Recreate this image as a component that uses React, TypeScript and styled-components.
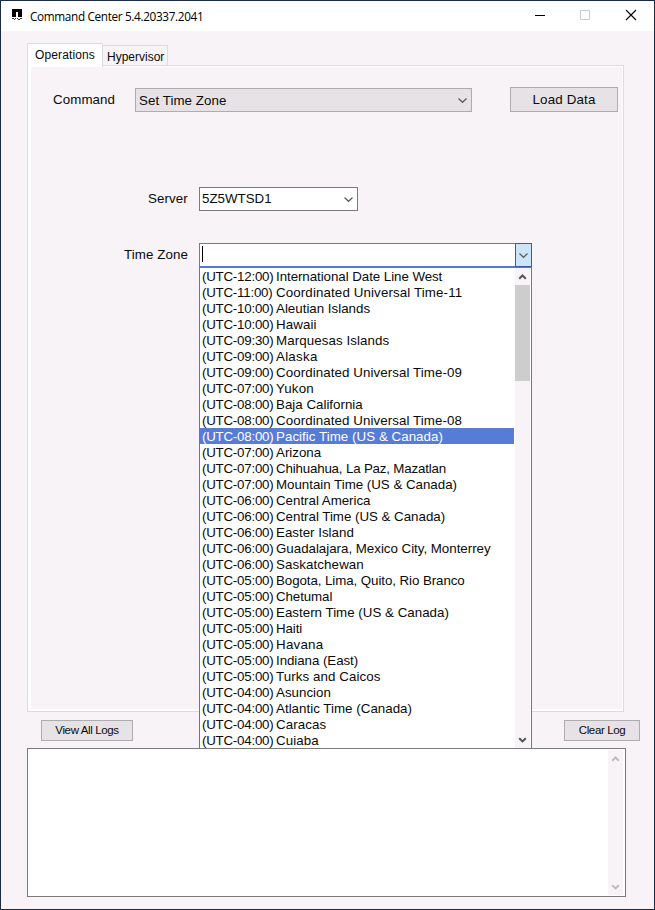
import React from 'react';
import styled, { createGlobalStyle } from 'styled-components';

const Global = createGlobalStyle`
  * { box-sizing: border-box; }
  body { margin: 0; }
`;

const Window = styled.div`
  width: 655px;
  height: 910px;
  overflow: hidden;
  display: flex;
  flex-direction: column;
  background: #f7f3f7;
  border: 1px solid #1b2b45;
  color: #0a0a0a;
  font: 13.33px/16px 'Liberation Sans', Arial, sans-serif;
`;

const TitleBar = styled.header`
  flex: none;
  height: 30px;
  display: flex;
  align-items: center;
  background: #fff;
  padding: 0 1px 0 11px;
`;

const Title = styled.h1`
  flex: 1;
  margin: 0 0 0 8px;
  font: 400 11.75px/16px 'Open Sans', sans-serif;
  letter-spacing: -0.34px;
  color: #000;
`;

const CaptionButtons = styled.div`
  display: flex;
  svg { display: block; width: 45px; height: 30px; }
`;

const Client = styled.main`
  flex: 1;
  display: flex;
  flex-direction: column;
  padding: 12px 15px 0 26px;
`;

const Tabs = styled.nav`
  display: flex;
  align-items: flex-end;
  height: 22px;
`;

const Tab = styled.div<{ $active?: boolean }>`
  position: relative;
  z-index: ${p => (p.$active ? 1 : 0)};
  width: ${p => (p.$active ? 76 : 65)}px;
  height: ${p => (p.$active ? 24 : 20)}px;
  margin-bottom: ${p => (p.$active ? -2 : 0)}px;
  padding: ${p => (p.$active ? '3px 0 0 7px' : '3px 0 0 4px')};
  border: 1px solid #dcdce0;
  border-bottom: 0;
  border-left-width: ${p => (p.$active ? 1 : 0)}px;
  background: ${p => (p.$active ? '#fff' : '#f7f3f7')};
  font-size: 12px;
  white-space: nowrap;
`;

const Text = styled.span<{ $track?: number }>`
  letter-spacing: ${p => p.$track ?? 0}px;
  white-space: pre;
`;

const Page = styled.section`
  width: 597px;
  height: 647px;
  border: 1px solid #dcdce0;
  background: #f7f3f7;
  box-shadow: inset 3px 1px #fff, inset -1px -2px #fff;
  padding: 21px 5px 0 25px;
`;

const Row = styled.div<{ $gap: number; $indent?: number }>`
  display: flex;
  align-items: flex-start;
  height: 25px;
  margin-bottom: ${p => p.$gap}px;
  padding-left: ${p => p.$indent ?? 0}px;
`;

const Label = styled.label<{ $width: number; $track?: number; $top?: number }>`
  width: ${p => p.$width}px;
  padding-top: ${p => p.$top ?? 4}px;
  letter-spacing: ${p => p.$track ?? 0.08}px;
  white-space: nowrap;
`;

const Combo = styled.div<{ $width: number; $filled?: boolean }>`
  display: flex;
  align-items: center;
  justify-content: space-between;
  width: ${p => p.$width}px;
  height: 24px;
  margin-top: ${p => (p.$filled ? 1 : 0)}px;
  padding: ${p => (p.$filled ? '1px 3px 0 3px' : '0 3px 0 2px')};
  border: 1px solid ${p => (p.$filled ? '#adadb0' : '#7a7a7a')};
  background: ${p => (p.$filled ? '#e6e2e6' : '#fff')};
`;

const OpenCombo = styled.div`
  position: relative;
  display: flex;
  width: 333px;
  height: 24px;
  border: 1px solid #567cd4;
  border-right: 0;
  background: #fff;
`;

const Caret = styled.span`
  flex: 1;
  &::before {
    content: '';
    display: block;
    width: 1px;
    height: 16px;
    margin: 2px 0 0 2px;
    background: #000;
  }
`;

const DropButton = styled.div`
  width: 17px;
  height: 24px;
  margin-top: -1px;
  display: grid;
  place-items: center;
  border: 1px solid #3a5ba8;
  background: #cce4f7;
`;

const Popup = styled.div`
  position: absolute;
  z-index: 3;
  left: -1px;
  top: 23px;
  width: 333px;
  height: 481px;
  display: flex;
  border: 1px solid #7a7678;
  border-bottom: 0;
  background: #fff;
`;

const Options = styled.ul`
  width: 315px;
  margin: 0;
  padding: 0 1px 0 0;
  list-style: none;
`;

const Option = styled.li<{ $selected?: boolean }>`
  display: grid;
  grid-template-columns: 74px 1fr;
  height: 16px;
  padding-left: 2px;
  line-height: 17px;
  white-space: nowrap;
  background: ${p => (p.$selected ? '#567cd6' : 'transparent')};
  color: ${p => (p.$selected ? '#fff' : '#0a0a0a')};
`;

const ScrollBar = styled.div`
  width: 15px;
  display: flex;
  flex-direction: column;
  justify-content: space-between;
  background: #f7f3f7;
  svg { flex: none; display: block; }
`;

const Thumb = styled.div`
  height: 96px;
  margin-bottom: auto;
  background: #cdcdcd;
`;

const Button = styled.button<{ $width: number; $height: number; $small?: boolean }>`
  width: ${p => p.$width}px;
  height: ${p => p.$height}px;
  padding: 0;
  border: 1px solid #adadb0;
  background: #e6e2e6;
  color: #0a0a0a;
  font: ${p => (p.$small ? '11.5px/17px' : '13.33px/16px')} 'Liberation Sans', Arial, sans-serif;
`;

const LoadSlot = styled.div`
  margin-left: auto;
`;

const LogActions = styled.div`
  display: flex;
  justify-content: space-between;
  height: 36px;
  padding: 8px 0 0 14px;
  margin-right: -1px;
`;

const LogBox = styled.div`
  width: 599px;
  height: 149px;
  display: flex;
  justify-content: flex-end;
  padding: 1px 2px 1px 0;
  border: 1px solid #7a7a7a;
  background: #fff;
`;

const Chevron = () => (
  <svg width="11" height="7" viewBox="0 0 11 7" fill="none" stroke="#5a5a5a" strokeWidth="1.2">
    <path d="M1.5 1.5 5.5 5.3 9.5 1.5" />
  </svg>
);

const Arrow = ({ down, color }: { down?: boolean; color: string }) => (
  <svg width="15" height="17" viewBox="0 0 15 17" fill="none" stroke={color} strokeWidth="2">
    <path d={down ? 'M4.2 7.2 7.5 10.4 10.8 7.2' : 'M4.2 10.8 7.5 7.5 10.8 10.8'} />
  </svg>
);

const AppIcon = () => (
  <svg width="10" height="14" viewBox="0 0 10 14" shapeRendering="crispEdges">
    <path d="M0 0H10V8H6V3H4V8H0Z" fill="#000" />
    <path d="M0 9H2V10H0ZM3 9H4V10H3ZM5 9H6V10H5ZM8 9H10V10H8ZM2 10H3V11H2ZM6 10H8V11H6Z" fill="#333" />
  </svg>
);

const zones: [string, string, number][] = [
  ['(UTC-12:00)', 'International Date Line West', -0.06],
  ['(UTC-11:00)', 'Coordinated Universal Time-11', 0.12],
  ['(UTC-10:00)', 'Aleutian Islands', 0],
  ['(UTC-10:00)', 'Hawaii', 0.1],
  ['(UTC-09:30)', 'Marquesas Islands', 0.08],
  ['(UTC-09:00)', 'Alaska', 0.26],
  ['(UTC-09:00)', 'Coordinated Universal Time-09', 0.08],
  ['(UTC-07:00)', 'Yukon', 0.15],
  ['(UTC-08:00)', 'Baja California', 0],
  ['(UTC-08:00)', 'Coordinated Universal Time-08', 0.08],
  ['(UTC-08:00)', 'Pacific Time (US & Canada)', 0.04],
  ['(UTC-07:00)', 'Arizona', 0],
  ['(UTC-07:00)', 'Chihuahua, La Paz, Mazatlan', -0.18],
  ['(UTC-07:00)', 'Mountain Time (US & Canada)', -0.02],
  ['(UTC-06:00)', 'Central America', -0.02],
  ['(UTC-06:00)', 'Central Time (US & Canada)', -0.02],
  ['(UTC-06:00)', 'Easter Island', 0],
  ['(UTC-06:00)', 'Guadalajara, Mexico City, Monterrey', -0.02],
  ['(UTC-06:00)', 'Saskatchewan', 0.1],
  ['(UTC-05:00)', 'Bogota, Lima, Quito, Rio Branco', -0.08],
  ['(UTC-05:00)', 'Chetumal', -0.1],
  ['(UTC-05:00)', 'Eastern Time (US & Canada)', 0.01],
  ['(UTC-05:00)', 'Haiti', -0.1],
  ['(UTC-05:00)', 'Havana', 0.25],
  ['(UTC-05:00)', 'Indiana (East)', -0.06],
  ['(UTC-05:00)', 'Turks and Caicos', 0.08],
  ['(UTC-04:00)', 'Asuncion', 0],
  ['(UTC-04:00)', 'Atlantic Time (Canada)', 0.02],
  ['(UTC-04:00)', 'Caracas', 0.1],
  ['(UTC-04:00)', 'Cuiaba', 0.08],
];

export default function App() {
  return (
    <>
      <Global />
      <Window>
        <TitleBar>
          <AppIcon />
          <Title>Command Center 5.4.20337.2041</Title>
          <CaptionButtons>
            <svg viewBox="0 0 45 30"><path d="M17 14.5H27" stroke="#000" /></svg>
            <svg viewBox="0 0 45 30"><path d="M17.5 9.5H26.5V18.5H17.5Z" stroke="#ccc" fill="none" /></svg>
            <svg viewBox="0 0 45 30"><path d="M18 9 28 19M28 9 18 19" stroke="#000" strokeWidth="1.1" /></svg>
          </CaptionButtons>
        </TitleBar>
        <Client>
          <Tabs>
            <Tab $active><Text $track={0.12}>Operations</Text></Tab>
            <Tab><Text>Hypervisor</Text></Tab>
          </Tabs>
          <Page>
            <Row $gap={75}>
              <Label $width={82} $top={5}>Command</Label>
              <Combo $width={337} $filled><Text $track={0.06}>Set Time Zone</Text><Chevron /></Combo>
              <LoadSlot><Button $width={108} $height={25}><Text $track={0.16}>Load Data</Text></Button></LoadSlot>
            </Row>
            <Row $gap={31} $indent={95}>
              <Label $width={51}>Server</Label>
              <Combo $width={159}><Text>5Z5WTSD1</Text><Chevron /></Combo>
            </Row>
            <Row $gap={0} $indent={71}>
              <Label $width={75}>Time Zone</Label>
              <OpenCombo>
                <Caret />
                <DropButton><Chevron /></DropButton>
                <Popup>
                  <Options>
                    {zones.map(([offset, name, track], i) => (
                      <Option key={name} $selected={i === 10}>
                        <Text $track={-0.24}>{offset}</Text>
                        <Text $track={track}>{name}</Text>
                      </Option>
                    ))}
                  </Options>
                  <ScrollBar>
                    <Arrow color="#555" />
                    <Thumb />
                    <Arrow color="#555" down />
                  </ScrollBar>
                </Popup>
              </OpenCombo>
            </Row>
          </Page>
          <LogActions>
            <Button $width={92} $height={21} $small><Text $track={-0.38}>View All Logs</Text></Button>
            <Button $width={76} $height={21} $small><Text $track={-0.38}>Clear Log</Text></Button>
          </LogActions>
          <LogBox>
            <ScrollBar>
              <Arrow color="#bfbcc0" />
              <Arrow color="#bfbcc0" down />
            </ScrollBar>
          </LogBox>
        </Client>
      </Window>
    </>
  );
}
